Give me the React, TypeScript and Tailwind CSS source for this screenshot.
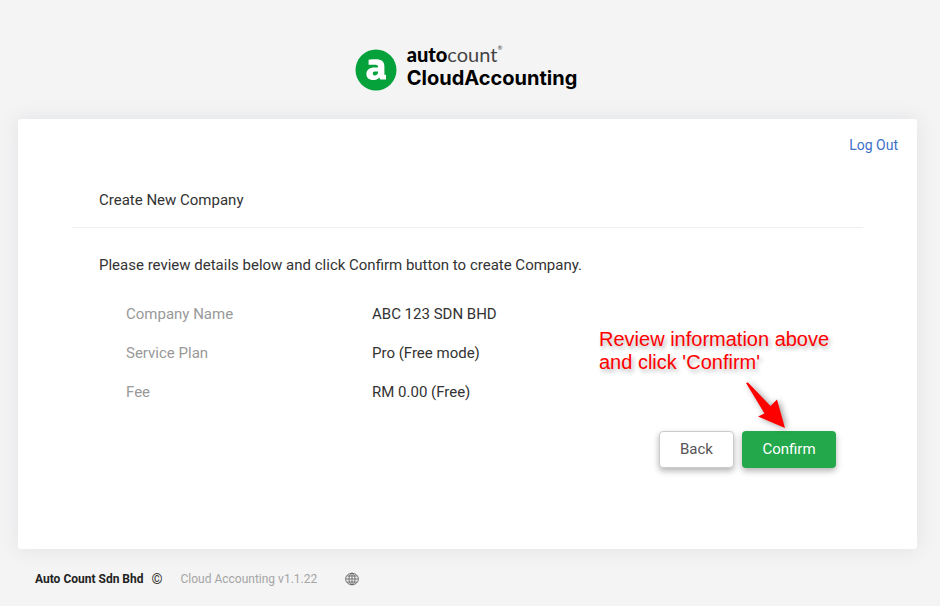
const details = [
  { label: "Company Name", value: "ABC 123 SDN BHD" },
  { label: "Service Plan", value: "Pro (Free mode)" },
  { label: "Fee", value: "RM 0.00 (Free)" },
];

const Logo = () => {
  return (
    <div className="flex items-center gap-2.5">
      <svg viewBox="0 0 42 42" className="size-[42px]" aria-hidden="true">
        <circle cx="21" cy="21" r="20.5" fill="#05a13b" />
        <path
          fill="#fff"
          fillRule="evenodd"
          d="M13.6 10.8C16 10.4 18.4 10.3 20.8 10.3C26.6 10.3 29.4 12.8 29.4 17.4V25.8H31V30.6H25.2L24.2 28.4C22.8 30.2 20.6 31 18 31C13.8 31 11.4 28.7 11.4 25C11.4 20.8 14.4 18.4 19.6 18.4H23V17.7C23 16.2 21.9 15.7 19.6 15.7H13.6ZM23 22.6H20.4C18.6 22.6 17.8 23.2 17.8 24.6C17.8 25.8 18.4 26.4 19.6 26.4C21.6 26.4 23 25.3 23 23.5Z"
        />
      </svg>
      <div className="pb-2 text-black">
        <div className="flex font-['Lato',sans-serif] text-xl leading-6">
          <span className="font-black">auto</span>
          <span className="text-[#444]">count</span>
          <span className="text-[6px] leading-3 text-[#444]">®</span>
        </div>
        <div className="font-['Inter',sans-serif] text-xl leading-6 font-bold">CloudAccounting</div>
      </div>
    </div>
  );
};

const GlobeIcon = () => {
  return (
    <svg viewBox="0 0 14 14" className="size-3.5" fill="none" stroke="#666" strokeWidth="0.9" aria-hidden="true">
      <ellipse cx="7" cy="7" rx="6.4" ry="5.8" />
      <ellipse cx="7" cy="7" rx="3" ry="5.8" />
      <path d="M7 1V13M1 7H13M2 4H12M2 10H12" />
    </svg>
  );
};

const Callout = () => {
  return (
    <div className="absolute bottom-9 left-0 w-60 pb-1 font-['Liberation_Sans',sans-serif] text-xl leading-[23px] text-[#ff0000]">
      <p className="[text-shadow:2px_3px_4px_rgba(0,0,0,0.3)]">
        Review information above
        <br />
        and click 'Confirm'
      </p>
      <svg viewBox="0 0 46 54" className="ml-[146px] h-[54px] w-[46px] overflow-visible drop-shadow-[2px_1px_3px_rgba(0,0,0,0.4)]" aria-hidden="true">
        <path fill="#f00" d="M1 9L3 8.5L25.5 32L32 25.5L40 54L13 42.5L19.5 39.5Z" />
      </svg>
    </div>
  );
};

export default function App() {
  return (
    <div className="flex min-h-screen flex-col bg-[#f4f4f4] font-['Roboto',sans-serif] text-[15px] leading-5 text-[#333]">
      <header className="flex h-[119px] items-center justify-center pt-5 pr-2">
        <Logo />
      </header>

      <main className="mr-[23px] ml-[18px] min-h-[430px] rounded-[3px] bg-white px-[54px] pt-4 shadow-[0_0_20px_rgba(60,70,110,0.1)]">
        <div className="-mr-[35px] flex justify-end">
          <a href="#logout" className="text-sm leading-5 text-[#3d71c8]">
            Log Out
          </a>
        </div>

        <h1 className="mt-[35px] border-b border-[#f0f0f0] px-[27px] pb-[17px]">Create New Company</h1>

        <section className="px-[27px] pt-[27px]">
          <p>Please review details below and click Confirm button to create Company.</p>
          <dl className="mt-[29px] flex flex-col gap-[19px] px-[27px]">
            {details.map((item) => (
              <div key={item.label} className="flex">
                <dt className="w-[246px] text-[#999]">{item.label}</dt>
                <dd>{item.value}</dd>
              </div>
            ))}
          </dl>
          <div className="mt-[29px] flex justify-end">
            <div className="relative flex w-[237px] justify-end gap-2">
              <Callout />
              <button
                type="button"
                className="h-[37px] w-[75px] rounded-[4px] border border-[#ccc] bg-white pb-0.5 text-[#555] shadow-[0_3px_6px_rgba(0,0,0,0.3)]"
              >
                Back
              </button>
              <button
                type="button"
                className="h-[37px] w-[94px] rounded-[4px] bg-[#23a84b] pb-0.5 text-white shadow-[0_3px_6px_rgba(0,0,0,0.3)]"
              >
                Confirm
              </button>
            </div>
          </div>
        </section>
      </main>

      <footer className="flex items-center px-[35px] pt-5 text-xs">
        <strong className="text-[#222]">Auto Count Sdn Bhd</strong>
        <span className="ml-2 text-sm leading-5 text-[#333]">©</span>
        <span className="ml-[18px] text-[#a5a5a5]">Cloud Accounting v1.1.22</span>
        <button type="button" aria-label="Change language" className="ml-7">
          <GlobeIcon />
        </button>
      </footer>
    </div>
  );
}
